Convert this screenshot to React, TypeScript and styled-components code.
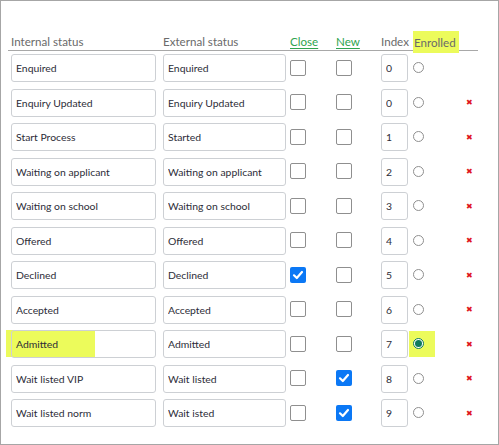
import React from "react";
import styled, { createGlobalStyle } from "styled-components";

const GlobalStyle = createGlobalStyle`
  body {
    margin: 0;
    font-family: Lato, "Noto Sans", sans-serif;
    background: #fff;
  }
`;

interface StatusRow {
  internal: string;
  external: string;
  close: boolean;
  isNew: boolean;
  index: number;
  enrolled: boolean;
  removable: boolean;
  marked?: boolean;
}

const rows: StatusRow[] = [
  { internal: "Enquired", external: "Enquired", close: false, isNew: false, index: 0, enrolled: false, removable: false },
  { internal: "Enquiry Updated", external: "Enquiry Updated", close: false, isNew: false, index: 0, enrolled: false, removable: true },
  { internal: "Start Process", external: "Started", close: false, isNew: false, index: 1, enrolled: false, removable: true },
  { internal: "Waiting on applicant", external: "Waiting on applicant", close: false, isNew: false, index: 2, enrolled: false, removable: true },
  { internal: "Waiting on school", external: "Waiting on school", close: false, isNew: false, index: 3, enrolled: false, removable: true },
  { internal: "Offered", external: "Offered", close: false, isNew: false, index: 4, enrolled: false, removable: true },
  { internal: "Declined", external: "Declined", close: true, isNew: false, index: 5, enrolled: false, removable: true },
  { internal: "Accepted", external: "Accepted", close: false, isNew: false, index: 6, enrolled: false, removable: true },
  { internal: "Admitted", external: "Admitted", close: false, isNew: false, index: 7, enrolled: true, removable: true, marked: true },
  { internal: "Wait listed VIP", external: "Wait listed", close: false, isNew: true, index: 8, enrolled: false, removable: true },
  { internal: "Wait listed norm", external: "Wait isted", close: false, isNew: true, index: 9, enrolled: false, removable: true },
];

const Frame = styled.div`
  width: 499px;
  height: 445px;
  box-sizing: border-box;
  border: 1px solid #a6a6a6;
  padding: 29px 20px 0 7px;
`;

const Grid = styled.div`
  display: grid;
  grid-template-columns: 3px 152px 127px 46px 45px 33px 50px 1fr;
`;

const HeaderRow = styled.div`
  display: contents;
`;

const HeadCell = styled.div<{ $highlight?: boolean }>`
  height: 21px;
  border-bottom: 1px solid #a8a8a8;
  display: flex;
  align-items: flex-end;
  padding-bottom: 2px;
  box-sizing: border-box;
  font-size: 11.6px;
  color: #6a6a6a;
  white-space: nowrap;
  margin-bottom: 3px;
  ${(p) =>
    p.$highlight &&
    `
    margin-left: -1px;
    span { background: #ecfb5b; padding: 5px 3px 4px 1px; margin-bottom: -5px; }
  `}
`;

const HeadLink = styled.a`
  color: #2ea44f;
  text-decoration: underline;
  text-underline-offset: 2px;
  cursor: pointer;
`;

const Row = styled.div`
  display: contents;
`;

const Cell = styled.div<{ $center?: boolean }>`
  height: 34.5px;
  display: flex;
  align-items: flex-start;
  box-sizing: border-box;
  ${(p) => p.$center && `align-items: center; padding-bottom: 7px;`}
`;

const TextBox = styled.input<{ $width: number }>`
  width: ${(p) => p.$width}px;
  height: 28px;
  box-sizing: border-box;
  border: 1px solid #cdd0d4;
  border-radius: 3px;
  padding: 0 4px;
  font-family: Lato, "Noto Sans", sans-serif;
  font-size: 10.4px;
  color: #2d2d38;
  background: transparent;
  outline: none;
`;

const Marked = styled.div`
  position: relative;
  &::before {
    content: "";
    position: absolute;
    left: -5px;
    top: 0;
    width: 89px;
    height: 27px;
    background: #ecfb5b;
    z-index: -1;
  }
`;

const Box = styled.span<{ $checked: boolean }>`
  width: 16px;
  height: 16px;
  box-sizing: border-box;
  border-radius: 2px;
  border: ${(p) => (p.$checked ? "none" : "1.5px solid #8f8f8f")};
  background: ${(p) => (p.$checked ? "#0b78f5" : "#fff")};
  display: flex;
  align-items: center;
  justify-content: center;
`;

const RadioWrap = styled.span<{ $mark?: boolean }>`
  width: 26px;
  height: 26px;
  margin-left: -5px;
  padding-left: 4px;
  box-sizing: border-box;
  display: flex;
  align-items: center;
  background: ${(p) => (p.$mark ? "#ecfb5b" : "transparent")};
`;

const Radio = styled.span<{ $on: boolean }>`
  width: 11px;
  height: 11px;
  box-sizing: border-box;
  border-radius: 50%;
  border: 1px solid ${(p) => (p.$on ? "#0e7a5c" : "#8f8f8f")};
  background: #fff;
  display: flex;
  align-items: center;
  justify-content: center;
  &::after {
    content: "";
    display: ${(p) => (p.$on ? "block" : "none")};
    width: 7px;
    height: 7px;
    border-radius: 50%;
    background: #0e7a5c;
  }
`;

const Remove = styled.span`
  color: #e0161b;
  font-size: 8px;
  margin-left: 2px;
  line-height: 1;
`;

const Check = () => (
  <svg width="12" height="12" viewBox="0 0 12 12">
    <path d="M2 6.3 L4.8 9 L10 3" fill="none" stroke="#fff" strokeWidth="2.2" strokeLinecap="round" strokeLinejoin="round" />
  </svg>
);

export default function App() {
  return (
    <>
      <GlobalStyle />
      <Frame>
        <Grid>
          <HeaderRow>
            <HeadCell />
            <HeadCell>Internal status</HeadCell>
            <HeadCell>External status</HeadCell>
            <HeadCell>
              <HeadLink>Close</HeadLink>
            </HeadCell>
            <HeadCell>
              <HeadLink>New</HeadLink>
            </HeadCell>
            <HeadCell>Index</HeadCell>
            <HeadCell $highlight>
              <span>Enrolled</span>
            </HeadCell>
            <HeadCell />
          </HeaderRow>
          {rows.map((r, i) => (
            <Row key={i}>
              <Cell />
              <Cell>
                {r.marked ? (
                  <Marked>
                    <TextBox $width={145} defaultValue={r.internal} />
                  </Marked>
                ) : (
                  <TextBox $width={145} defaultValue={r.internal} />
                )}
              </Cell>
              <Cell>
                <TextBox $width={123} defaultValue={r.external} />
              </Cell>
              <Cell $center>
                <Box $checked={r.close}>{r.close && <Check />}</Box>
              </Cell>
              <Cell $center>
                <Box $checked={r.isNew}>{r.isNew && <Check />}</Box>
              </Cell>
              <Cell>
                <TextBox $width={27} defaultValue={String(r.index)} />
              </Cell>
              <Cell $center>
                <RadioWrap $mark={r.marked}>
                  <Radio $on={r.enrolled} />
                </RadioWrap>
              </Cell>
              <Cell $center>{r.removable && <Remove>✖</Remove>}</Cell>
            </Row>
          ))}
        </Grid>
      </Frame>
    </>
  );
}
